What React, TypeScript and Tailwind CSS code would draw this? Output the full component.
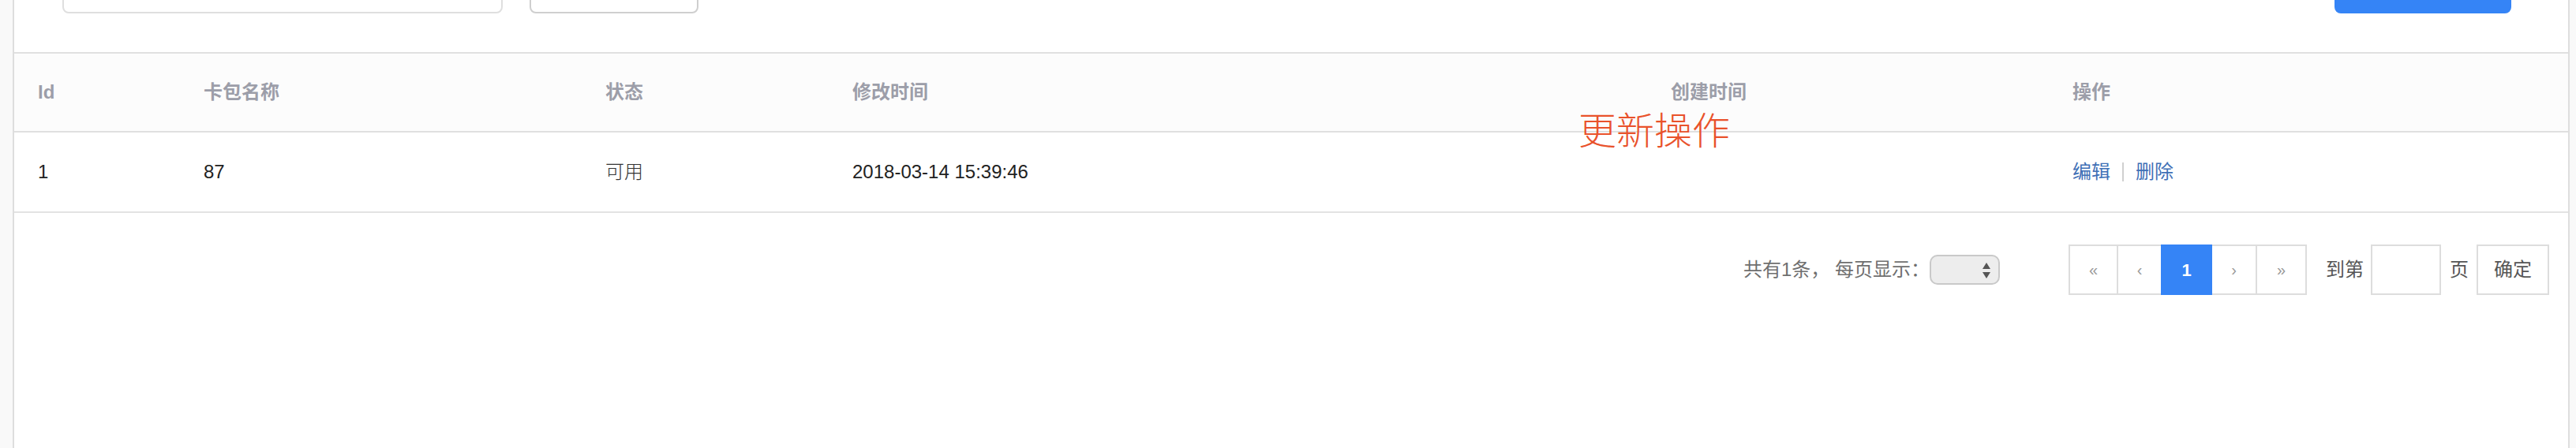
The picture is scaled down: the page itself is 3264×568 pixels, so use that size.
import React from 'react';

const font = "font-['Liberation_Sans','Noto_Sans_CJK_SC',sans-serif]";

const columns = ['Id', '卡包名称', '状态', '修改时间', '创建时间', '操作'];

function SelectArrows() {
  return (
    <svg width="12" height="22" viewBox="0 0 12 22" className="absolute right-[9px] top-[7px]">
      <path d="M6 1 L11 9 L1 9 Z" fill="#555" />
      <path d="M1 13 L11 13 L6 21 Z" fill="#555" />
    </svg>
  );
}

function Pager() {
  const btn = 'flex h-[64px] items-center justify-center border-y-2 border-r-2 border-[#dddddd] bg-white text-[20px] text-[#999]';
  return (
    <div className="ml-[87px] flex">
      <div className={`${btn} w-[63px] border-l-2`}>«</div>
      <div className={`${btn} w-[56px]`}>‹</div>
      <div className="-ml-[2px] flex h-[64px] w-[65px] items-center justify-center bg-[#3584f6] text-[22px] font-bold text-white">1</div>
      <div className={`${btn} w-[57px]`}>›</div>
      <div className={`${btn} w-[63px]`}>»</div>
    </div>
  );
}

export default function App() {
  return (
    <div className={`relative h-[568px] w-full overflow-hidden bg-[#f9f9f9] ${font}`}>
      <div className="ml-[16px] mr-[8px] min-h-[568px] border-x-2 border-[#dedede] bg-white">
        {/* search form, cut off by the top edge */}
        <div className="flex h-[66px] items-start">
          <div className="-mt-[47px] ml-[61px] h-[64px] w-[558px] rounded-[8px] border-2 border-[#dfdfdf] bg-white" />
          <div className="-mt-[47px] ml-[34px] h-[64px] w-[214px] rounded-[8px] border-2 border-[#cfcfcf] bg-white" />
          <div className="-mt-[47px] ml-auto mr-[72px] h-[64px] w-[224px] rounded-[8px] bg-[#3584f6]" />
        </div>

        {/* table */}
        <div className="grid h-[102px] grid-cols-[210px_509px_313px_1037px_509px_1fr] items-center border-y-2 border-[#e0e0e0] bg-[#fcfcfc] pl-[30px] text-[24px] font-bold text-[#9c9ea9]">
          {columns.map((c) => (
            <div key={c}>{c}</div>
          ))}
        </div>
        <div className="grid h-[102px] grid-cols-[210px_509px_313px_1037px_509px_1fr] items-center border-b-2 border-[#e3e3e3] pl-[30px] text-[24px] text-[#222]">
          <div>1</div>
          <div>87</div>
          <div className="font-light text-[#333]">可用</div>
          <div>2018-03-14 15:39:46</div>
          <div />
          <div className="flex items-center text-[#3f70b6]">
            <span>编辑</span>
            <span className="mx-[15px] h-[24px] w-[2px] bg-[#d0d0d0]" />
            <span>删除</span>
          </div>
        </div>

        {/* pagination */}
        <div className="flex items-center justify-end pr-[24px] pt-[40px] text-[24px] text-[#6f6f6f]">
          <span>共有1条， 每页显示：</span>
          <div className="relative h-[38px] w-[89px] rounded-[10px] border-2 border-[#c9c9c9] bg-[#ededed]">
            <SelectArrows />
          </div>
          <Pager />
          <span className="ml-[24px] text-[#555]">到第</span>
          <div className="ml-[9px] h-[64px] w-[89px] border-2 border-[#dddddd] bg-white" />
          <span className="ml-[11px] text-[#555]">页</span>
          <div className="ml-[10px] flex h-[64px] w-[92px] items-center justify-center border-2 border-[#dddddd] bg-white text-[#555]">确定</div>
        </div>
      </div>

      {/* annotation over the screenshot */}
      <div className="absolute left-[2000px] top-[143px] text-[48px] font-light leading-none text-[#e9522b]">更新操作</div>
    </div>
  );
}
